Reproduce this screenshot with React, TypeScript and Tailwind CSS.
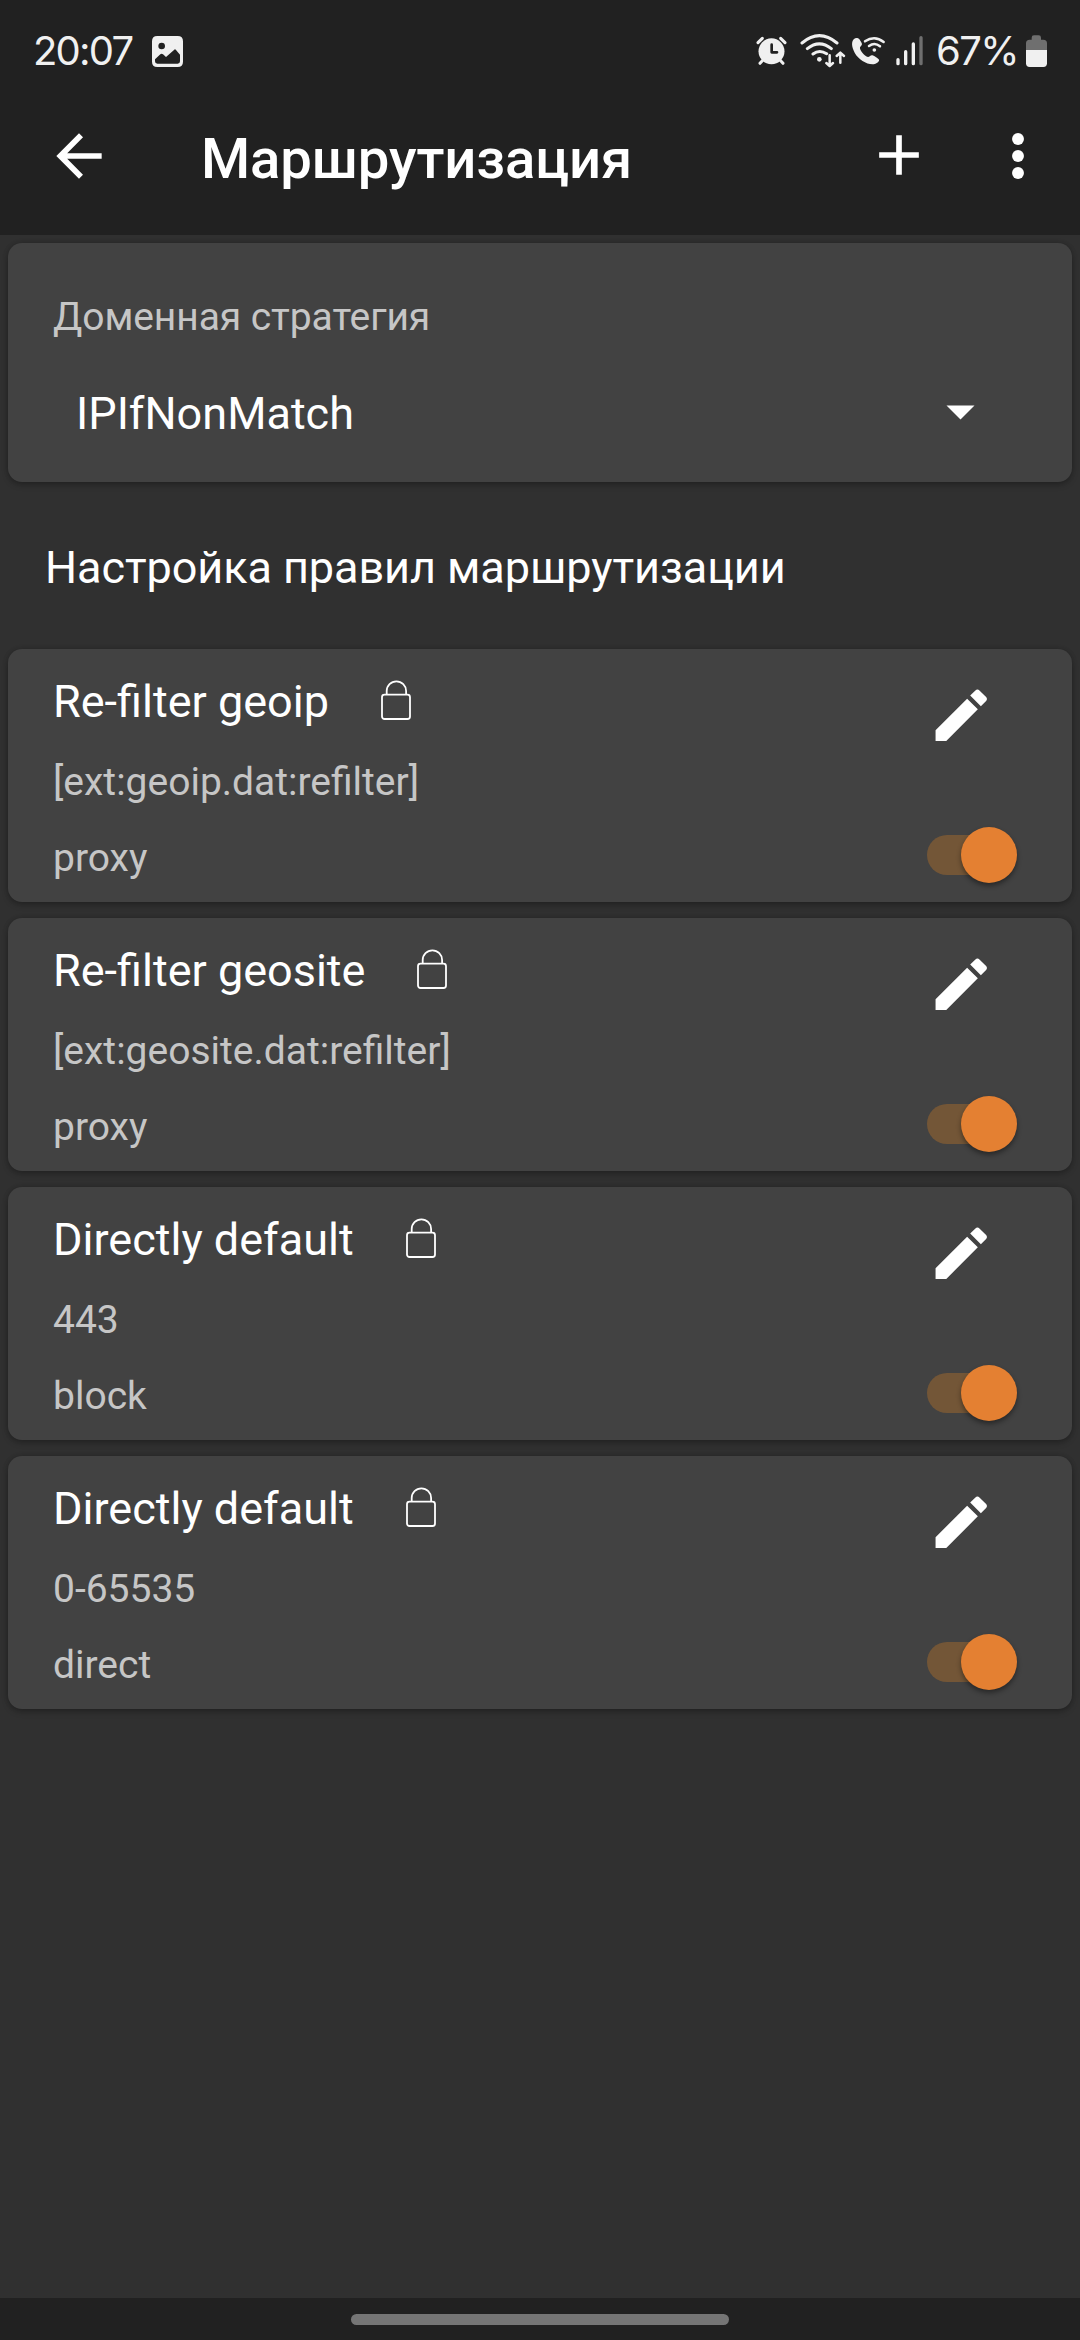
import React from "react";

type Rule = { name: string; match: string; outbound: string };

const rules: Rule[] = [
  { name: "Re-filter geoip", match: "[ext:geoip.dat:refilter]", outbound: "proxy" },
  { name: "Re-filter geosite", match: "[ext:geosite.dat:refilter]", outbound: "proxy" },
  { name: "Directly default", match: "443", outbound: "block" },
  { name: "Directly default", match: "0-65535", outbound: "direct" },
];

const cardClass =
  "mx-2 rounded-[14px] bg-[#424242] shadow-[0_3px_6px_rgba(0,0,0,0.22),0_0_5px_rgba(0,0,0,0.16)]";

function StatusBar() {
  return (
    <div className="flex h-[77px] items-start pl-[33px] pr-8 text-[#f0f0f0]">
      <span className="mt-[26px] w-[101px] font-['Inter'] text-[40px] leading-[50px] tracking-[-1.8px]">20:07</span>
      <svg className="mt-9 ml-[18px] h-[31px] w-[31px]" viewBox="0 0 93 93">
        <path
          fill="currentColor"
          fillRule="evenodd"
          d="M16 0H77Q93 0 93 16V77Q93 93 77 93H16Q0 93 0 77V16Q0 0 16 0ZM29 20A10 10 0 1 0 29 40A10 10 0 1 0 29 20ZM9 70V76Q9 83 16 83H77Q84 83 84 76V56L72 42Q69 38 66 42L42 63L33 55Q29 52 25 55Z"
        />
      </svg>
      <div className="mt-[33px] ml-auto flex">
        <svg className="h-[35px] w-[31px]" viewBox="48 39 93 105">
          <circle cx="94.500" cy="94" r="39" fill="currentColor" />
          <path
            d="M54 68L67 55M135 68L122 55M67 122L60 130M122 122L129 130"
            stroke="currentColor"
            strokeWidth="9"
            strokeLinecap="round"
          />
          <path d="M95 74V97H111" fill="none" stroke="#212121" strokeWidth="8" strokeLinecap="round" strokeLinejoin="round" />
        </svg>
        <svg className="ml-[13px] h-[35px] w-[47px]" viewBox="180 39 141 105" fill="none" stroke="currentColor" strokeLinecap="round">
          <path d="M186 69Q238 25 291 69M202 86Q238 57 274 86M219 102Q238 87 260 101" strokeWidth="9" />
          <circle cx="238" cy="118" r="7" fill="currentColor" stroke="none" />
          <path d="M269 106V137M259 129L269 138L279 129M301 128V98M290 108L301 98L312 108" strokeWidth="7.500" strokeLinejoin="round" />
        </svg>
        <svg className="ml-1 h-[35px] w-[35px]" viewBox="333 39 105 105">
          <path
            fill="currentColor"
            d="M352 54C357 54 361 62 365 69C368 74 363 78 360 82C358 90 373 109 384 111C389 111 392 105 397 106C403 108 414 115 417 119C419 123 411 130 404 132C384 136 356 120 344 98C334 79 334 65 342 57C345 54 349 53 352 54Z"
          />
          <path d="M375 64Q404 44 431 66M387 78Q404 66 420 79" fill="none" stroke="currentColor" strokeWidth="7.500" strokeLinecap="round" />
          <circle cx="403" cy="90" r="5.500" fill="currentColor" />
        </svg>
        <svg className="ml-[9px] h-[35px] w-[29px]" viewBox="465 39 87 105" stroke="currentColor" strokeWidth="10" strokeLinecap="round">
          <path d="M474 119V131M497 95V131M520 72V131" />
          <path d="M543 53V131" stroke="#6f6f6f" />
        </svg>
      </div>
      <span className="mt-[26px] ml-[12px] w-[89px] font-['Inter'] text-[40px] leading-[50px] tracking-[-1.6px]">67%</span>
      <svg className="mt-[33px] h-[35px] w-[23px]" viewBox="855 39 69 105">
        <path fill="#6f6f6f" d="M858 90V70Q858 59 869 59H875V53Q875 46 882 46H896Q903 46 903 53V59H910Q921 59 921 70V90Z" />
        <path fill="currentColor" d="M858 90H921V130Q921 141 910 141H869Q858 141 858 130Z" />
      </svg>
    </div>
  );
}

function Toolbar() {
  return (
    <div className="flex h-[158px] items-center text-white">
      <svg className="ml-[45px] h-[68px] w-[68px]" viewBox="0 0 24 24" fill="currentColor">
        <path d="M20 11H7.830L13.420 5.410L12 4L4 12L12 20L13.410 18.590L7.830 13H20Z" />
      </svg>
      <h1 className="mt-[5px] ml-[88px] text-[56.250px] leading-[66px] font-medium tracking-[-0.1px]">Маршрутизация</h1>
      <svg className="mr-[51px] mb-[2px] ml-auto h-[68px] w-[68px]" viewBox="0 0 24 24" fill="currentColor">
        <path d="M19 13H13V19H11V13H5V11H11V5H13V11H19Z" />
      </svg>
      <svg className="mr-7 h-[68px] w-[68px]" viewBox="0 0 24 24" fill="currentColor">
        <circle cx="12" cy="6" r="2.100" />
        <circle cx="12" cy="12" r="2.100" />
        <circle cx="12" cy="18" r="2.100" />
      </svg>
    </div>
  );
}

function Lock() {
  return (
    <svg className="mb-[3px] h-10 w-[30px]" viewBox="0 0 30 40" fill="none" stroke="white" strokeWidth="1.800">
      <rect x="1" y="14.700" width="28" height="24.300" rx="2.500" />
      <path d="M5.700 14.700V11A9.700 9.700 0 0 1 25.100 11V14.700" />
    </svg>
  );
}

function Switch() {
  return (
    <div className="flex h-14 w-[90.500px] items-center justify-end rounded-full">
      <div className="-mr-[44px] h-10 w-[78.500px] rounded-full bg-[#735637]" />
      <div className="relative h-14 w-14 rounded-full bg-[#e48032] shadow-[0_3px_5px_rgba(0,0,0,0.4)]" />
    </div>
  );
}

function RuleCard({ rule }: { rule: Rule }) {
  return (
    <div className={cardClass}>
      <div className="flex h-[253px] justify-between pr-[55px] pl-[45px]">
        <div className="flex flex-col pt-[26px]">
          <div className="flex h-[53px] items-center gap-[52px]">
            <span className="text-[45px] leading-[53px] text-white">{rule.name}</span>
            <Lock />
          </div>
          <span className="mt-[31px] text-[39px] leading-[46px]">{rule.match}</span>
          <span className="mt-[30px] text-[39px] leading-[46px]">{rule.outbound}</span>
        </div>
        <div className="flex flex-col items-start pt-[31.500px]">
          <svg className="h-[68.500px] w-[68.500px]" viewBox="0 0 24 24" fill="white">
            <path d="M3 17.250V21h3.750L17.810 9.940l-3.750-3.750L3 17.250zM20.710 7.040c.39-.39.39-1.020 0-1.410l-2.340-2.340c-.39-.39-1.020-.39-1.410 0l-1.830 1.830 3.750 3.750 1.830-1.830z" />
          </svg>
          <div className="mt-[78px]">
            <Switch />
          </div>
        </div>
      </div>
    </div>
  );
}

export default function App() {
  return (
    <div className="flex h-[2340px] w-[1080px] flex-col overflow-hidden bg-[#303030] font-['Roboto',sans-serif] text-[#c6c6c6]">
      <header className="h-[235px] bg-[#212121]">
        <StatusBar />
        <Toolbar />
      </header>
      <main className="flex flex-1 flex-col pt-2">
        <section className={cardClass}>
          <div className="flex h-[239px] flex-col pt-[51px] pl-[45px]">
            <span className="text-[39px] leading-[46px] tracking-[-0.08px]">Доменная стратегия</span>
            <div className="mt-[47px] flex items-center justify-between pr-[97.500px] pl-[23px]">
              <span className="text-[45px] leading-[53px] text-white">IPIfNonMatch</span>
              <svg className="mb-[3px] h-[15px] w-[29px]" viewBox="0 0 29 15">
                <path d="M0.500 0.500H28.500L14.500 14.500Z" fill="white" />
              </svg>
            </div>
          </div>
        </section>
        <h2 className="mt-[59px] ml-[45px] text-[45px] leading-[53px] tracking-[-0.07px] text-white">Настройка правил маршрутизации</h2>
        <div className="mt-[55px] flex flex-col gap-4">
          {rules.map((rule, i) => (
            <RuleCard key={i} rule={rule} />
          ))}
        </div>
      </main>
      <footer className="flex h-[42px] justify-center bg-[#212121] pt-4">
        <div className="h-[11px] w-[378px] rounded-full bg-[#757575]" />
      </footer>
    </div>
  );
}
